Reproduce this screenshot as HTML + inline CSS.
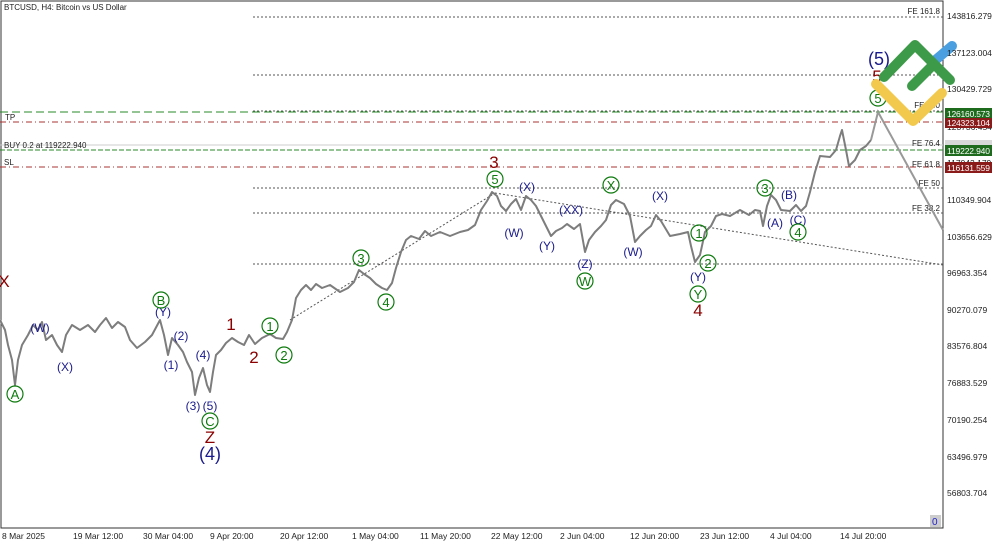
<!DOCTYPE html>
<html><head><meta charset="utf-8"><style>
body{margin:0;background:#fff;width:1000px;height:545px;overflow:hidden;font-family:"Liberation Sans",sans-serif}
svg{display:block}
.n{fill:#1a1a8c;font-size:12px;text-anchor:middle}
.r{fill:#8b0000;font-size:17px;text-anchor:middle}
.g{fill:#0d7a0d;font-size:13px;text-anchor:middle}
.ax{font-size:8.5px;fill:#222}
.fe{font-size:8px;fill:#222;text-anchor:end}
</style></head><body>
<svg width="1000" height="545" viewBox="0 0 1000 545">
<defs><g id="c"><circle r="8" fill="none" stroke="#0d7a0d" stroke-width="1.2"/></g></defs>
<rect x="1" y="1" width="942" height="527" fill="#fff" stroke="#333" stroke-width="1"/>
<text x="4" y="10" font-size="8" fill="#222">BTCUSD, H4:  Bitcoin vs US Dollar</text>
<g stroke="#555" stroke-dasharray="2,2" stroke-width="1">
<line x1="253" y1="17" x2="943" y2="17"/><line x1="253" y1="75" x2="943" y2="75"/>
<line x1="253" y1="111" x2="943" y2="111"/><line x1="253" y1="188" x2="943" y2="188"/>
<line x1="253" y1="213" x2="943" y2="213"/><line x1="253" y1="264" x2="943" y2="264"/>
<line x1="290" y1="320" x2="495" y2="193"/><line x1="495" y1="193" x2="943" y2="265"/>
</g>
<line x1="0" y1="112" x2="943" y2="112" stroke="#2a8a2a" stroke-dasharray="8,4"/>
<line x1="0" y1="122" x2="943" y2="122" stroke="#a33" stroke-dasharray="6,3,1,3"/>
<line x1="0" y1="145" x2="943" y2="145" stroke="#ccc"/>
<line x1="0" y1="150" x2="943" y2="150" stroke="#2a8a2a" stroke-dasharray="5,2"/>
<line x1="0" y1="167" x2="943" y2="167" stroke="#a33" stroke-dasharray="6,3,1,3"/>
<text x="5" y="120" font-size="8" fill="#222">TP</text>
<text x="4" y="148" font-size="8" fill="#222">BUY 0.2 at 119222.940</text>
<text x="4" y="165" font-size="8" fill="#222">SL</text>
<g class="fe"><text x="940" y="14">FE 161.8</text><text x="940" y="72">FE</text><text x="940" y="108">FE 100</text><text x="940" y="146">FE 76.4</text><text x="940" y="167">FE 61.8</text><text x="940" y="186">FE 50</text><text x="940" y="211">FE 38.2</text></g>
<polyline fill="none" stroke="#7d7d7d" stroke-width="2" stroke-linejoin="round" points="0,320 5,330 8,345 12,360 15,385 18,360 22,345 28,335 33,325 38,330 42,322 46,340 52,335 57,345 62,352 66,335 72,325 80,330 88,325 95,332 100,325 106,318 112,328 118,322 125,327 130,340 137,348 145,342 152,335 160,320 164,335 168,355 172,338 178,345 183,352 187,362 192,372 195,395 199,378 203,368 207,385 210,392 213,372 216,355 221,350 226,343 232,338 238,342 244,345 249,335 255,344 262,338 270,334 276,338 283,339 287,332 292,320 296,298 301,290 306,285 311,290 316,284 322,288 330,285 340,292 348,288 354,282 359,270 364,274 370,278 376,284 382,288 387,290 392,283 396,268 401,252 406,240 411,236 419,239 425,231 431,236 440,232 450,236 460,232 468,230 475,225 481,210 487,201 492,192 497,196 501,206 506,211 511,204 516,199 521,210 526,196 531,200 536,206 541,216 546,226 551,236 556,231 562,228 567,224 574,229 580,224 585,252 589,240 595,232 601,226 606,220 611,205 616,200 624,204 630,216 635,242 640,236 646,230 651,226 656,215 661,221 670,236 680,234 688,232 691,246 695,262 700,255 705,232 711,226 716,216 722,214 730,216 740,210 749,215 755,210 760,211 763,226 767,206 771,195 776,200 781,210 790,211 796,205 801,211 806,206 810,192 815,172 820,156 830,157 836,150 840,136 842,130 846,150 849,166 855,160 860,150 866,146 871,140"/>
<polyline fill="none" stroke="#999" stroke-width="2" points="871,140 878,112 943,230"/>
<g class="n">
<text x="40" y="332">(W)</text><text x="65" y="371">(X)</text><text x="163" y="316">(Y)</text>
<text x="181" y="340">(2)</text><text x="171" y="369">(1)</text><text x="203" y="359">(4)</text>
<text x="193" y="410">(3)</text><text x="210" y="410">(5)</text>
<text x="527" y="191">(X)</text><text x="514" y="237">(W)</text><text x="547" y="250">(Y)</text>
<text x="571" y="214">(XX)</text><text x="585" y="268">(Z)</text><text x="633" y="256">(W)</text>
<text x="660" y="200">(X)</text><text x="698" y="281">(Y)</text><text x="775" y="227">(A)</text>
<text x="789" y="199">(B)</text><text x="798" y="224">(C)</text>
<text x="210" y="460" font-size="18">(4)</text><text x="879" y="65" font-size="18">(5)</text>
</g>
<g class="r"><text x="4" y="287">X</text><text x="231" y="330">1</text><text x="254" y="363">2</text>
<text x="210" y="443">Z</text><text x="494" y="168">3</text><text x="698" y="316">4</text><text x="877" y="82">5</text></g>
<g class="g">
<use href="#c" x="15" y="394"/><text x="15" y="399">A</text>
<use href="#c" x="161" y="300"/><text x="161" y="305">B</text>
<use href="#c" x="210" y="421"/><text x="210" y="426">C</text>
<use href="#c" x="270" y="326"/><text x="270" y="331">1</text>
<use href="#c" x="284" y="355"/><text x="284" y="360">2</text>
<use href="#c" x="361" y="258"/><text x="361" y="263">3</text>
<use href="#c" x="386" y="302"/><text x="386" y="307">4</text>
<use href="#c" x="495" y="179"/><text x="495" y="184">5</text>
<use href="#c" x="611" y="185"/><text x="611" y="190">X</text>
<use href="#c" x="585" y="281"/><text x="585" y="286">W</text>
<use href="#c" x="698" y="294"/><text x="698" y="299">Y</text>
<use href="#c" x="699" y="233"/><text x="699" y="238">1</text>
<use href="#c" x="708" y="263"/><text x="708" y="268">2</text>
<use href="#c" x="765" y="188"/><text x="765" y="193">3</text>
<use href="#c" x="798" y="232"/><text x="798" y="237">4</text>
<use href="#c" x="878" y="98"/><text x="878" y="103">5</text>
</g>
<g fill="none" stroke-linecap="round" stroke-linejoin="round" stroke-width="10">
<polyline stroke="#f2c94c" points="876,84 913,121 942,93"/>
<line x1="932" y1="63" x2="952" y2="46" stroke="#4a9fe0"/>
<polyline stroke="#3d9a48" points="884,77 915,45 950,80"/>
<line x1="912" y1="86" x2="931" y2="67" stroke="#3d9a48"/>
</g>
<g class="ax">
<text x="947" y="19">143816.279</text><text x="947" y="56">137123.004</text><text x="947" y="92">130429.729</text>
<text x="947" y="130">123736.454</text><text x="947" y="166">117043.179</text>
<text x="947" y="203">110349.904</text><text x="947" y="240">103656.629</text><text x="947" y="276">96963.354</text>
<text x="947" y="313">90270.079</text><text x="947" y="349">83576.804</text><text x="947" y="386">76883.529</text>
<text x="947" y="423">70190.254</text><text x="947" y="460">63496.979</text><text x="947" y="496">56803.704</text>
</g>
<rect x="945" y="108" width="47" height="11" fill="#1e6b1e"/><text x="947" y="117" font-size="8.5" fill="#fff" textLength="43">126160.573</text>
<rect x="945" y="118" width="47" height="10" fill="#8b1a1a"/><text x="947" y="126" font-size="8.5" fill="#fff" textLength="43">124323.104</text>
<rect x="945" y="140" width="47" height="10" fill="#d8d8d8"/>
<rect x="945" y="145" width="47" height="11" fill="#1e6b1e"/><text x="947" y="154" font-size="8.5" fill="#fff" textLength="43">119222.940</text>
<rect x="945" y="162" width="47" height="11" fill="#8b1a1a"/><text x="947" y="171" font-size="8.5" fill="#fff" textLength="43">116131.559</text>
<rect x="930" y="515" width="11" height="12" fill="#ccc"/><text x="932" y="525" font-size="10" fill="#22c">0</text>
<g class="ax" font-size="7.5">
<text x="2" y="539">8 Mar 2025</text><text x="73" y="539">19 Mar 12:00</text><text x="143" y="539">30 Mar 04:00</text>
<text x="210" y="539">9 Apr 20:00</text><text x="280" y="539">20 Apr 12:00</text><text x="352" y="539">1 May 04:00</text>
<text x="420" y="539">11 May 20:00</text><text x="491" y="539">22 May 12:00</text><text x="560" y="539">2 Jun 04:00</text>
<text x="630" y="539">12 Jun 20:00</text><text x="700" y="539">23 Jun 12:00</text><text x="770" y="539">4 Jul 04:00</text>
<text x="840" y="539">14 Jul 20:00</text>
</g>
</svg>
</body></html>
